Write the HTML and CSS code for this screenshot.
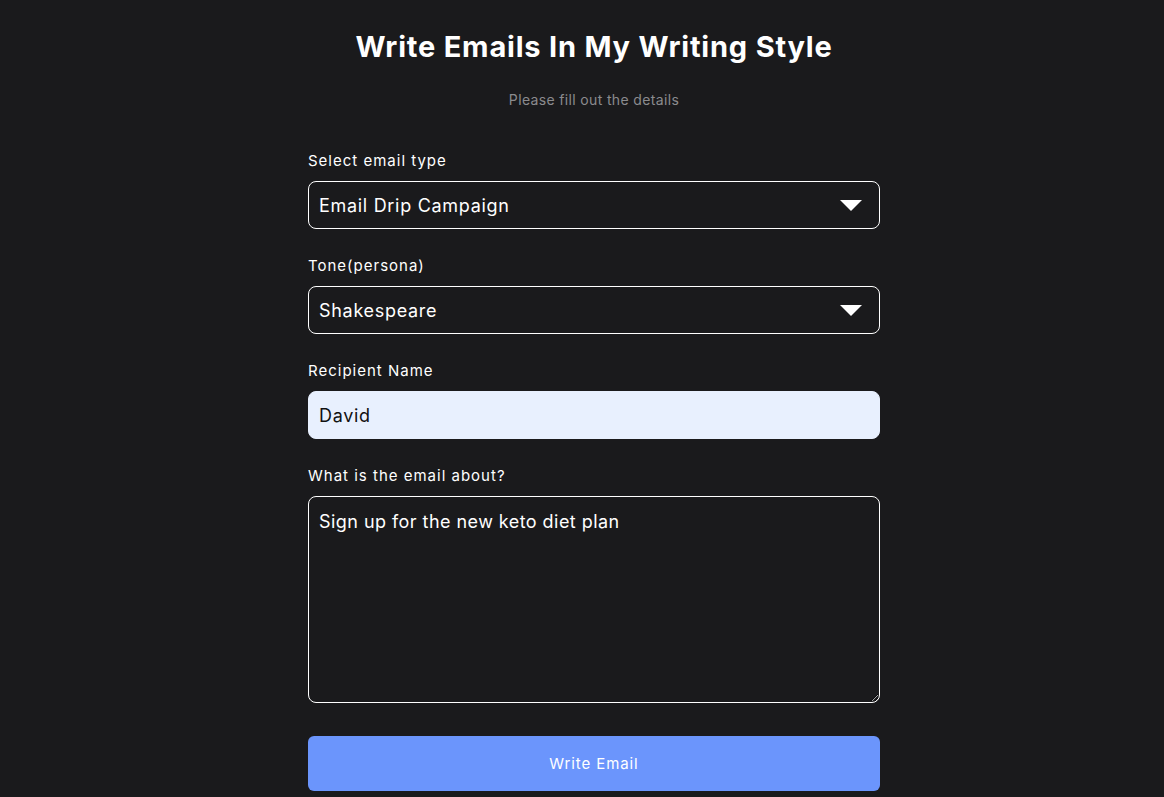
FILE: index.html
```html
<!DOCTYPE html>
<html lang="en">
<head>
<meta charset="utf-8">
<title>Write Emails In My Writing Style</title>
<link rel="stylesheet" href="styles.css">
</head>
<body>
<main class="page">
  <h1 class="title">Write Emails In My Writing Style</h1>
  <p class="subtitle">Please fill out the details</p>
  <form class="form">
    <label class="label" for="type">Select email type</label>
    <div class="select-wrap">
      <select id="type" class="field select">
        <option>Email Drip Campaign</option>
      </select>
      <svg class="caret" width="22" height="12" viewBox="0 0 22 12"><path d="M0 0H22L11 11Z" fill="#fff"/></svg>
    </div>
    <label class="label" for="tone">Tone(persona)</label>
    <div class="select-wrap">
      <select id="tone" class="field select">
        <option>Shakespeare</option>
      </select>
      <svg class="caret" width="22" height="12" viewBox="0 0 22 12"><path d="M0 0H22L11 11Z" fill="#fff"/></svg>
    </div>
    <label class="label" for="name">Recipient Name</label>
    <input id="name" class="field input" type="text" value="David">
    <label class="label" for="about">What is the email about?</label>
    <textarea id="about" class="field textarea">Sign up for the new keto diet plan</textarea>
    <button type="button" class="btn">Write Email</button>
  </form>
</main>
</body>
</html>
```
FILE: styles.css
```css
* { box-sizing: border-box; }
html, body { margin: 0; padding: 0; }
body {
  background: #1a1a1c;
  color: #ffffff;
  font-family: "Inter", "Open Sans", sans-serif;
  padding-left: 24px;
}
.page {
  width: 572px;
  margin: 0 auto;
  padding-top: 26px;
  display: flex;
  flex-direction: column;
}
.title {
  margin: 0;
  text-align: center;
  font-size: 29px;
  line-height: 42px;
  font-weight: 700;
  letter-spacing: 0.8px;
}
.subtitle {
  margin: 22px 0 0;
  text-align: center;
  font-size: 14px;
  line-height: 20px;
  color: #8b8b8e;
  letter-spacing: 0.35px;
}
.form {
  display: flex;
  flex-direction: column;
  margin-top: 40px;
}
.label {
  font-size: 15px;
  line-height: 22px;
  margin-bottom: 9px;
  color: #ffffff;
  letter-spacing: 1px;
}
.field {
  width: 100%;
  font-family: inherit;
  font-size: 18px;
  letter-spacing: 0.7px;
  color: #ffffff;
  background: #1a1a1c;
  border: 1px solid #ffffff;
  border-radius: 8px;
  padding: 0 10px;
  outline: none;
  margin-bottom: 26px;
}
.select-wrap {
  position: relative;
}
.select {
  -webkit-appearance: none;
  appearance: none;
  height: 48px;
  display: block;
}
.caret {
  position: absolute;
  right: 18px;
  top: 19px;
  pointer-events: none;
}
.input {
  height: 48px;
  background: #e8f0fe;
  color: #111111;
  border-color: #e8f0fe;
}
.textarea {
  height: 207px;
  padding: 12px 10px;
  line-height: 26px;
  letter-spacing: 0.45px;
  resize: vertical;
  margin-bottom: 33px;
}
.btn {
  height: 55px;
  width: 100%;
  border: none;
  border-radius: 6px;
  background: #6b95fc;
  color: #ffffff;
  font-family: inherit;
  font-size: 15px;
  letter-spacing: 0.9px;
  cursor: pointer;
}
```
